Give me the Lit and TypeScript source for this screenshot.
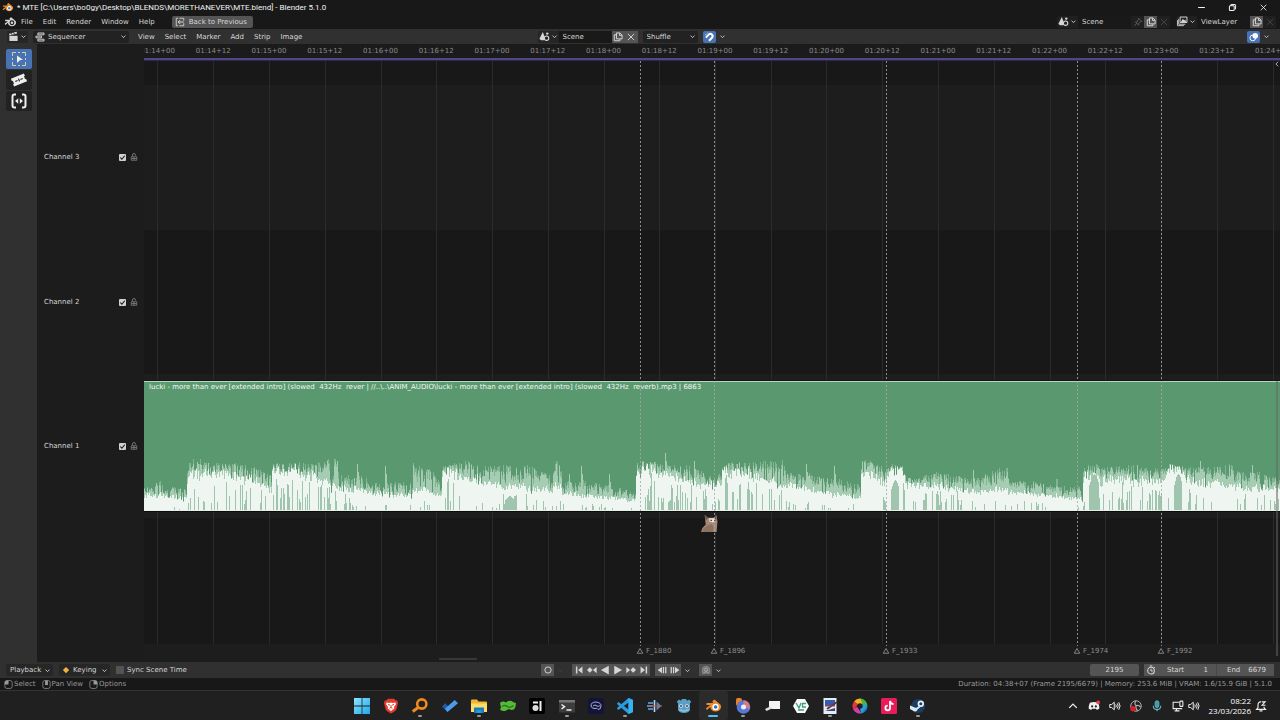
import { LitElement, html, svg, css, nothing, TemplateResult } from "lit";
import { customElement, property } from "lit/decorators.js";

/* ---------- icon set ---------- */

const glyphs: Record<string, TemplateResult> = {
  blender: svg`<path d="M9.500 1.500 15 6.200c1 .9 1.300 2 1 3.400-.6 2.600-2.800 4-5.400 4-2.900 0-5.200-1.800-5.400-4.500L2 12 .8 10.400 5.200 7H1.500V5h6.500L7.400 3Z" fill="currentColor"/><circle cx="10.600" cy="9" r="3.200" fill="var(--eye, #181818)"/><circle cx="10.600" cy="9" r="1.800" fill="var(--pupil, currentColor)"/>`,
  down: svg`<path d="M3.500 6 8 10.500 12.500 6" fill="none" stroke="currentColor" stroke-width="2"/>`,
  up: svg`<path d="M3 10.500 8 5.500l5 5" fill="none" stroke="currentColor" stroke-width="1.800"/>`,
  close: svg`<path d="m3 3 10 10M13 3 3 13" fill="none" stroke="currentColor" stroke-width="1.500"/>`,
  minimize: svg`<path d="M2 8h12" stroke="currentColor" stroke-width="1.800"/>`,
  restore: svg`<path d="M5 5V4q0-1.500 1.500-1.500h5Q13.500 2.500 13.500 4.500v5Q13.500 11 12 11" fill="none" stroke="currentColor" stroke-width="1.800"/><rect x="2.500" y="5" width="8.500" height="8.500" rx="1.500" fill="none" stroke="currentColor" stroke-width="1.800"/>`,
  back: svg`<path d="M5 2H2v12h3M7 2h7v4M14 10v4H7" fill="none" stroke="currentColor" stroke-width="1.400"/><path d="M14 8H5m3-3L5 8l3 3" fill="none" stroke="currentColor" stroke-width="1.600"/>`,
  editor: svg`<path d="M2 7h12v7.500H2z" fill="currentColor"/><path d="m1.500 4 11-3 .7 2.500-11 3z" fill="currentColor"/><path d="m4.500 3 1.500 2.500M8 2l1.500 2.500" stroke="#222" stroke-width="1.200"/>`,
  strips: svg`<path d="M4.500 1.500h10v3h-10zM1.500 6.500h9v3h-9zM4.500 11.500h10v3h-10z" fill="#555" stroke="currentColor" stroke-width="1.400"/>`,
  scene: svg`<path d="M5.500 1.500 9 10.500a4 3 0 0 1-8 0Z" fill="currentColor"/><circle cx="11" cy="10.500" r="3.200" fill="#222" stroke="currentColor" stroke-width="1.600"/><circle cx="12" cy="3.800" r="1.800" fill="currentColor"/>`,
  copy: svg`<path d="M5.500 1.500h5.500l3.500 3.500v6h-9Z" fill="none" stroke="currentColor" stroke-width="1.600"/><path d="M10.500 2v3.500H14M5 4.500H2v9.500h9v-2.500" fill="none" stroke="currentColor" stroke-width="1.600"/>`,
  layers: svg`<path d="M4.500 1.500h10v8h-10z" fill="#222" stroke="currentColor" stroke-width="1.400"/><path d="m5.500 9 3-5 2 2.500 1.500-1.500L13.500 9Z" fill="currentColor"/><path d="M2.500 4v8h9.500M.8 6v8H10" fill="none" stroke="currentColor" stroke-width="1.300"/>`,
  pin: svg`<path d="m9 2 5 5-2 .5-2.500 2.500-.5 3-5-5 3-.5L8.500 4ZM6 10l-4 4" fill="none" stroke="currentColor" stroke-width="1.300"/>`,
  magnet: svg`<path d="M3 9 7.500 4.200a3.600 3.600 0 0 1 5.200 5L8 14" fill="none" stroke="currentColor" stroke-width="3.200"/><path d="m2.500 5 1-2M6 2l-.5-1" stroke="currentColor" stroke-width="1.200"/>`,
  overlay: svg`<circle cx="6" cy="9.500" r="4.500" fill="none" stroke="currentColor" stroke-width="1.500"/><circle cx="10" cy="6" r="4.500" fill="currentColor"/>`,
  lock: svg`<path d="M5 7V4a3 3 0 0 1 6 0v1" fill="none" stroke="currentColor" stroke-width="1.600"/><path d="M2.500 7.500h11v7h-11zM8 8v6M3 11h10" fill="none" stroke="currentColor" stroke-width="1.500"/>`,
  pointer: svg`<path d="M1.500 5V1.500H5M7 1.500h2M11 1.500h3.500V5M14.500 7v2M14.500 11v3.500H11M9 14.500H7M5 14.500H1.500V11M1.500 9V7" fill="none" stroke="#d5d2a0" stroke-width="1"/><path d="m6 4.500 6 4.300-3.100.4L6 12Z" fill="currentColor"/>`,
  blade: svg`<g transform="rotate(-22 8 8)"><path d="M1 3.800h14v2.700h-1v3h1v2.700H1V9.500h1v-3H1z" fill="currentColor"/><path d="M4 8h2.500M9.500 8H12M8 6.500v3" stroke="#222" stroke-width="1.200"/></g>`,
  slip: svg`<path d="M5 1.500H3.500Q1.500 1.500 1.500 3.500v9q0 2 2 2H5M11 1.500h1.500q2 0 2 2v9q0 2-2 2H11" fill="none" stroke="currentColor" stroke-width="2"/><path d="M7.200 5.200v5.600L4 8ZM8.800 5.200v5.600L12 8Z" fill="currentColor"/>`,
  diamond: svg`<path d="m8 3 5 5-5 5-5-5Z" fill="#f5b042"/>`,
  ring: svg`<circle cx="8" cy="8" r="5" fill="none" stroke="currentColor" stroke-width="1.500"/>`,
  first: svg`<path d="M3 2.500h2.400v11H3zM13.500 2.500v11L6.500 8Z" fill="currentColor"/>`,
  prevKey: svg`<path d="M4.500 3.500 9 8l-4.500 4.500L0 8ZM15.500 3v10L9.500 8Z" fill="currentColor"/>`,
  reverse: svg`<path d="M14 1v14L1.500 8Z" fill="currentColor"/>`,
  play: svg`<path d="M2 1v14l12.500-7Z" fill="currentColor"/>`,
  nextKey: svg`<path d="M11.500 3.500 16 8l-4.500 4.500L7 8ZM.5 3v10l6-5Z" fill="currentColor"/>`,
  last: svg`<path d="M10.600 2.500H13v11h-2.400zM2.500 2.500v11l7-5.500Z" fill="currentColor"/>`,
  stepBack: svg`<path d="M8 3v10L1 8ZM9.300 3h2v10h-2zM13 3h2v10h-2z" fill="currentColor"/>`,
  stepNext: svg`<path d="M8 3v10l7-5ZM1 3h2v10H1zM4.700 3h2v10h-2z" fill="currentColor"/>`,
  ghost: svg`<path d="M2 13V8a6 6 0 0 1 12 0v5Z" fill="#777" stroke="#999"/><circle cx="8" cy="7.500" r="2.500" fill="none" stroke="#bbb"/><path d="m4 14 4-4 4 4" fill="none" stroke="#bbb"/>`,
  clock: svg`<circle cx="8" cy="9" r="5.300" fill="none" stroke="currentColor" stroke-width="1.700"/><path d="M8 6v3.500h3M6 1.500h4M12.500 3l1.500 1.500" fill="none" stroke="currentColor" stroke-width="1.600"/>`,
  mouseLeft: svg`<rect x="1.500" y="1" width="13" height="14" rx="3.500" fill="none" stroke="currentColor" stroke-width="1.300"/><path d="M1.500 8V4Q1.500 1 5 1h3v7Z" fill="currentColor"/>`,
  mouseMid: svg`<rect x="1.500" y="1" width="13" height="14" rx="3.500" fill="none" stroke="currentColor" stroke-width="1.300"/><path d="M5.500 1h5v8h-5Z" fill="currentColor"/>`,
  mouseRight: svg`<rect x="1.500" y="1" width="13" height="14" rx="3.500" fill="none" stroke="currentColor" stroke-width="1.300"/><path d="M14.500 8V4Q14.500 1 11 1H8v7Z" fill="currentColor"/>`,
  marker: svg`<path d="m8 3 5.500 9.500h-11Z" fill="none" stroke="currentColor" stroke-width="1.800"/>`,
  chevronLeft: svg`<path d="M11 2 5 8l6 6" fill="none" stroke="currentColor" stroke-width="2.200"/>`,
  tick: svg`<path d="m3 8 3.500 4L13 4" fill="none" stroke="currentColor" stroke-width="2.500"/>`,
  windows: svg`<defs><linearGradient id="w" x2="1" y2="1"><stop stop-color="#8ce4ff"/><stop offset="1" stop-color="#1fa6ea"/></linearGradient></defs><path d="M0 0h7.600v7.600H0zM8.400 0H16v7.600H8.400zM0 8.400h7.600V16H0zM8.400 8.400H16V16H8.400z" fill="url(#w)"/>`,
  brave: svg`<path d="m5 .8 6 0 1.500 1.500 1.700.2L15 5l-1.500 6q-.5 2-5.500 4.500Q3 13 2.500 11L1 5l.8-2.500 1.700-.2Z" fill="#e5392c"/><path d="m3.800 4.500 2.700.5L8 4.500l1.500.5 2.700-.5.8 1.500-2 3 .3 1.500L8 13l-3.300-2.500L5 9 3 6Z" fill="#fff"/><path d="m5 6.500 2 .7M11 6.500l-2 .7M8 7v2.500m-1.500.8L8 9.500l1.500.8" stroke="#e5392c" fill="none"/>`,
  everything: svg`<circle cx="9.800" cy="6" r="4.600" fill="none" stroke="#f08a1c" stroke-width="2.600"/><path d="m6.200 9.500-5.500 4" stroke="#f08a1c" stroke-width="3"/>`,
  todo: svg`<path d="M0 8.500 3.200 5.300l5.300 5.200-3 3.500Z" fill="#2059a8"/><path d="M5.500 14 2.900 10.800 12.700 2l3.300 3.200Z" fill="#4b9cec"/>`,
  folder: svg`<path d="M0 2.500Q0 1.500 1 1.500h5l1.500 2H15q1 0 1 1V14H0Z" fill="#f2b531"/><path d="M0 5.500h16V14H0z" fill="#fddc6a"/><path d="M3 9.500h10V15H3z" fill="#1d78bf"/><path d="M5.500 12h5v3h-5z" fill="#1ea0dd"/>`,
  frog: svg`<path d="M0 5q2.500-2.500 6-.5 2-2.500 5.500-1.500l2.500 1.500 2 .5q0 4-2 6.500l-3 .5-2-1-4 2q-3 .5-5-1.500l1-2Z" fill="#56b93b"/><path d="M2 8.500q3-2 5.500 0t6-1" stroke="#2c7a1d" fill="none" stroke-width="1.500"/>`,
  mono: svg`<rect width="16" height="16" rx="2" fill="#000"/><circle cx="6.500" cy="10" r="3" fill="#ddd"/><path d="M4 4.500h5M11.500 3v10" stroke="#f0f0f0" stroke-width="2"/>`,
  terminal: svg`<path d="M0 2h16v12.500H0z" fill="#3d3d3d"/><path d="M0 2h16v2.500H0z" fill="#777"/><path d="m2.500 6.500 3 2.200-3 2.300M7.500 12h5" fill="none" stroke="#eee" stroke-width="1.500"/>`,
  brain: svg`<rect width="16" height="16" rx="3" fill="#13143a"/><path d="M3 8q0-4 5-4 5 .5 5 4 0 3.500-3 3.500-1-2-3-1-3 .5-4-2.500Zm2 0q2-2 4 0 1.500 1 3-.5" fill="none" stroke="#a9aecb" stroke-width="1"/>`,
  code: svg`<path d="M11.500 0 16 2v12l-4.500 2L.5 6.500 0 5.300l1.500-1.300L11.500 11.500V4.500L1.500 12 0 10.700l.5-1.200Z" fill="#2b9be0"/><path d="M11.500 0 16 2v12l-4.500 2Z" fill="#36b2f4"/>`,
  merge: svg`<path d="M1 5h5M0 8h6M1 11h5" stroke="#4e88b9" stroke-width="1.800"/><path d="M7.500 2v12" stroke="#b9d5e8" stroke-width="1.600"/><path d="m9.500 3.500 5 4.500-5 4.500Z" fill="#5583ad"/><path d="M3 8h12" stroke="#cf5146"/>`,
  godot: svg`<path d="M2 5 .5 4 3 1.500l2 1.200L6 1h4l1 1.700 2-1.200L15.500 4 14 5v7q-1.500 3-6 3t-6-3Z" fill="#5a9fc8"/><circle cx="5" cy="8" r="1.800" fill="#eee"/><circle cx="11" cy="8" r="1.800" fill="#eee"/><circle cx="5" cy="8" r="1" fill="#345"/><circle cx="11" cy="8" r="1" fill="#345"/><path d="M3 12h3v1h4v-1h3" stroke="#a9cfe3" fill="none"/>`,
  resolve: svg`<rect x="1" y="0" width="6" height="8" rx="2" fill="#e78326"/><circle cx="8.500" cy="9" r="6.800" fill="#5577d8"/><path d="M8.500 2.200a6.800 6.800 0 0 1 6 9l-6-2.200Z" fill="#d67b83"/><circle cx="8.500" cy="9" r="2.500" fill="#eef"/>`,
  camera: svg`<path d="M5 3h11v8H8L5 9Z" fill="#f3f3f3"/><path d="m1 11 5-2.500 2 2L2.500 13Z" fill="#ddd"/>`,
  hexa: svg`<path d="M4 1h8l4 7-4 7H4L0 8Z" fill="#f7faf8"/><path d="m3 5 3 5 2-5M13 5.500H9.500V9H13M5 12h6" fill="none" stroke="#3f9c7c" stroke-width="1.300"/>`,
  paint: svg`<path d="M1.500 0h13v16h-13z" fill="#e6ecf4"/><path d="M3 2h10v6H3z" fill="#335eb0"/><path d="m3 13 10-3v3Z" fill="#324a7b"/><path d="m5 11 10-7" stroke="#5b3a3a" stroke-width="2"/><path d="M3 8h10" stroke="#aa3e4a"/>`,
  spiral: svg`<path d="M8 .5A7.500 7.500 0 0 1 15.500 8L11 7Z" fill="#42b649"/><path d="M15.500 8A7.500 7.500 0 0 1 9 15.400L9 11Z" fill="#227bdc"/><path d="M9.500 15.400A7.500 7.500 0 0 1 1 11L5 8.500Z" fill="#d43ca8"/><path d="M1.200 11.200A7.500 7.500 0 0 1 2.500 3L8 5Z" fill="#e53a2e"/><path d="M2.200 3.300A7.500 7.500 0 0 1 8.500.5L11 7 6 6Z" fill="#f2b522"/><path d="m11 6 4.500 2L9 15.400 8 10Z" fill="#25a3d6"/><circle cx="8" cy="8" r="2.700" fill="#222"/>`,
  note: svg`<rect width="16" height="16" rx="1.500" fill="#e81c5a"/><path d="M9 3v7a2.300 2.300 0 1 1-2.300-2.300M9 3q.5 3 3.500 3.200" fill="none" stroke="#fff" stroke-width="1.800"/>`,
  steam: svg`<path d="M1 7q1.500-6 7.500-6 6.500.5 6.500 7t-7 7q-5 0-6.500-4.500Z" fill="#1b3c63"/><circle cx="10.800" cy="5.800" r="3.200" fill="#e9f1f8"/><circle cx="10.800" cy="5.800" r="1.500" fill="#1b3c63"/><path d="m0 7.500 6 2.500 3-2 1.500 1-3 2.500q-.5 2.500-3 2L0 11Z" fill="#dce9f3"/>`,
  discord: svg`<path d="M2.500 3.500Q8 1.500 13.500 3.500q2 4 1.500 8-2 1.500-3.500 1.500l-1-1.500h-5l-1 1.500Q3 13 1 11.500q-.5-4 1.500-8Z" fill="#f0f0f0"/><circle cx="5.500" cy="8.500" r="1.400" fill="#222"/><circle cx="10.500" cy="8.500" r="1.400" fill="#222"/><circle cx="13.500" cy="3" r="2.500" fill="#ee4352"/>`,
  speaker: svg`<path d="M1 6h2.500L7 3v10L3.500 10H1Z" fill="none" stroke="currentColor" stroke-width="1.300"/><path d="M9 6q1.500 2 0 4M11 4.500q2.500 3.500 0 7M13 3q3.500 5 0 10" fill="none" stroke="currentColor" stroke-width="1.300"/>`,
  obs: svg`<circle cx="8" cy="8" r="7" fill="#202020" stroke="#b5b5b5" stroke-width="1.300"/><path d="M8 1.500q-3 3 0 6 4-1 6 2M8 7.500q-1 4 2 6.500" fill="none" stroke="#b5b5b5" stroke-width="1.500"/><circle cx="4" cy="11.500" r="3.600" fill="#dc1f26"/>`,
  mic: svg`<rect x="5.500" y="1" width="5" height="9" rx="2.500" fill="#3f9ba6" stroke="#6ec1cb"/><path d="M3 7.500q0 5 5 5t5-5M8 12.500V15" fill="none" stroke="#6ec1cb" stroke-width="1.400"/>`,
  monitor: svg`<path d="M10 3H1.500v8.500h12M6 12v2.500M3.500 14.500H10" fill="none" stroke="currentColor" stroke-width="1.400"/><rect x="10.500" y="1.500" width="4" height="7" rx="1" fill="none" stroke="currentColor" stroke-width="1.400"/>`,
  bell: svg`<path d="M8 2.500Q4 2 4 7v3l-2 2.500h12L12 10V9M6 14.500h4" fill="none" stroke="currentColor" stroke-width="1.500"/><path d="M9 2.500h4.500L9.500 7H14" fill="none" stroke="currentColor" stroke-width="1.500"/>`,
  cat: svg`<path d="M3.500.5 6.500 3H12L14.500.5l1 6-.8 10H0Q1 12 4.500 9.500L4 6Z" fill="#a48a76"/><path d="M3.500.5 6.500 3 4.500 6ZM14.500.5 12 3l2.500 3Z" fill="#6d5648"/><path d="M7.500 3.500h5l2 2.500-3.500 1.500L8 6.500Z" fill="#efe2d4"/><path d="M9 5.500h1.200M12.500 5.500h1.200" stroke="#222" stroke-width="1.200"/><path d="M10 9q3 3 1 7.500H1Q2 11 10 9Z" fill="#8d735f"/>`,
};

@customElement("ui-icon")
export class UiIcon extends LitElement {
  @property() name = "";
  static styles = css`
    :host { display: inline-block; flex: none; width: 10px; height: 10px; }
    svg { display: block; width: 100%; height: 100%; overflow: visible; }
  `;
  render() {
    return html`<svg viewBox="0 0 16 16" aria-hidden="true">${glyphs[this.name] ?? nothing}</svg>`;
  }
}

/* ---------- sound strip waveform ---------- */

/* [x, peak height, body height, notch density] */
const envelope: number[][] = [
  [0, 28, 14, 0], [8, 24, 14, 0], [16, 34, 15, 0], [22, 26, 14, 0], [42, 24, 11, 0], [43, 46, 26, .1],
  [46, 54, 34, .2], [60, 51, 36, .4], [90, 49, 33, .45], [112, 45, 28, .4], [127, 36, 20, .3],
  [128, 48, 38, .3], [150, 50, 37, .5], [176, 51, 29, .5], [187, 55, 24, .4], [194, 52, 22, .4],
  [196, 38, 22, .3], [218, 36, 19, .2], [230, 32, 16, .05], [266, 30, 14, .1], [268, 30, 14, .1],
  [269, 52, 20, .1], [276, 52, 18, .2], [278, 46, 20, .2], [288, 42, 18, .1], [297, 26, 14, 0],
  [298, 48, 38, .5], [320, 51, 32, .2], [345, 48, 24, .1], [370, 46, 23, .5], [386, 48, 20, .3],
  [408, 36, 20, .2], [409, 53, 22, .2], [416, 53, 22, .2], [418, 34, 17, .05], [440, 31, 14, .1],
  [465, 27, 12, .05], [491, 20, 9, .05], [492, 50, 34, .1], [500, 52, 38, .2], [521, 49, 34, .5],
  [545, 46, 28, .5], [558, 40, 24, .4], [577, 38, 25, .1], [578, 49, 38, .4], [605, 50, 34, .6],
  [630, 52, 27, .5], [640, 54, 22, .3], [642, 42, 23, .2], [665, 38, 19, .2], [690, 34, 15, .1],
  [716, 28, 12, .15], [717, 53, 34, .1], [730, 50, 33, .2], [742, 44, 26, .2], [745, 49, 38, .1],
  [758, 48, 38, .3], [762, 34, 24, .4], [790, 39, 24, .5], [805, 39, 21, .3], [827, 35, 17, .2],
  [845, 40, 18, .1], [855, 46, 20, .1], [863, 45, 18, .2], [866, 31, 17, .1], [890, 31, 16, .3],
  [911, 25, 13, .1], [912, 40, 14, .1], [914, 28, 12, 0], [938, 26, 11, 0], [939, 46, 30, 0],
  [952, 49, 36, .1], [957, 45, 28, .2], [960, 46, 30, .4], [985, 47, 30, .4], [1020, 44, 29, .4],
  [1024, 48, 42, .1], [1036, 48, 42, .1], [1042, 46, 28, .4], [1065, 46, 25, .2], [1086, 48, 24, .1],
  [1100, 39, 22, .3], [1116, 41, 22, .3], [1136, 34, 20, .3],
];
const spikes: Record<number, number> = { 213: 46, 241: 44, 425: 36, 437: 44, 465: 36, 521: 57, 550: 49, 662: 46, 690: 44, 829: 40, 1056: 49, 1108: 45 };
/* dips that open in the loud body: [from, to, height] */
const hollows: number[][] = [[361, 370, 14], [747, 755, 30], [945, 955, 36], [1030, 1038, 36]];

function waveform() {
  let seed = 7;
  const rnd = () => (seed = (seed * 16807) % 2147483647) / 2147483647;
  let haze = "", peak = "", body = "", notch = "", k = 0, drift = 0.5;
  const column = (x: number, h: number) => `M${x} 60V${(60 - h).toFixed(1)}h1V60z`;
  for (let x = 0; x < 1136; x++) {
    while (k < envelope.length - 2 && envelope[k + 1][0] <= x) k++;
    const a = envelope[k], b = envelope[k + 1];
    const t = Math.min(1, (x - a[0]) / (b[0] - a[0]));
    const mix = (i: number) => a[i] + (b[i] - a[i]) * t;
    drift = drift * 0.6 + rnd() * 0.4;
    let p = mix(1) - rnd() * rnd() * (mix(1) - mix(2)) * 1.1 - drift * 5;
    const s = spikes[x] ?? (spikes[x - 1] ? spikes[x - 1] - 8 : 0);
    if (s) p = s;
    const m = Math.max(7, Math.min(p - 1, mix(2) * (0.72 + drift * 0.3 + rnd() * 0.34)));
    haze += column(x, p);
    peak += column(x, s ? p : m + (p - m) * (0.45 + rnd() * 0.55));
    body += column(x, m);
    const hollow = hollows.find((h) => x >= h[0] && x < h[1]);
    const hit = rnd() < mix(3) * 0.8 + 0.04;
    const depth = mix(3) > 0.25 ? m * (0.2 + rnd() * 0.65) : m * (0.1 + rnd() * 0.35);
    if (hollow) notch += column(x, hollow[2] * (0.7 + 0.3 * Math.sin((Math.PI * (x - hollow[0])) / (hollow[1] - hollow[0]))));
    else if (hit) notch += column(x, depth);
  }
  return { haze, peak, body, notch };
}

@customElement("sound-strip")
export class SoundStrip extends LitElement {
  @property() label = "";
  private wave = waveform();
  static styles = css`
    :host {
      display: flex; flex-direction: column; justify-content: space-between; overflow: hidden;
      background: #5a996f; border-top: 1px solid #b9d6c3; border-bottom: 1px solid #e8efea;
      box-shadow: 0 1px #0c0c0c, 0 -1px #151515; box-sizing: border-box;
    }
    .label { padding-left: 5px; line-height: 11px; color: #f2f7f3; white-space: pre; }
    svg { display: block; width: 100%; height: 60px; }
    .haze { fill: #82b393; }
    .peak { fill: #a6ccb3; }
    .body { fill: #eff5f1; }
    .notch { fill: #a0c5ae; }
  `;
  render() {
    return html`<div class="label">${this.label}</div>
      <svg viewBox="0 0 1136 60" preserveAspectRatio="none" shape-rendering="crispEdges" aria-hidden="true">
        <path class="haze" d=${this.wave.haze}></path>
        <path class="peak" d=${this.wave.peak}></path>
        <path class="body" d=${this.wave.body}></path>
        <path class="notch" d=${this.wave.notch}></path>
      </svg>`;
  }
}

/* ---------- timeline ---------- */

const SPAN = 1136;
const pct = (x: number) => `${((x / SPAN) * 100).toFixed(3)}%`;
const ticks = [
  "01:14+00", "01:14+12", "01:15+00", "01:15+12", "01:16+00", "01:16+12", "01:17+00", "01:17+12", "01:18+00", "01:18+12",
  "01:19+00", "01:19+12", "01:20+00", "01:20+12", "01:21+00", "01:21+12", "01:22+00", "01:22+12", "01:23+00", "01:23+12", "01:24+00",
].map((text, i) => ({ text, x: 13.5 + i * 55.75 }));
const markers = [
  { text: "F_1880", x: 496 }, { text: "F_1896", x: 570 }, { text: "F_1933", x: 742 }, { text: "F_1974", x: 933 }, { text: "F_1992", x: 1017 },
];

@customElement("time-line")
export class TimeLine extends LitElement {
  static styles = css`
    :host { display: grid; grid-template-rows: 14px 3px 1fr; position: relative; overflow: hidden; background: #1d1d1d; }
    .ruler { position: relative; background: #1b1b1b; color: #8b8b8b; }
    .tick { position: absolute; top: 0; line-height: 15px; transform: translateX(-50%); white-space: nowrap; }
    .range { background: #51468a; border-bottom: 1px solid #2c2847; box-sizing: border-box; }
    .canvas { position: relative; display: grid; grid-template-rows: 24fr 145fr 145fr 144fr 126fr 18fr; }
    .dark { background: #181818; }
    .light { background: #1d1d1d; }
    .grid { position: absolute; top: 0; bottom: 18px; width: 1px; background: #2b2b2b; }
    .marker { position: absolute; top: 0; bottom: 6px; display: flex; flex-direction: column; width: 1px; color: #8d8d8d; }
    .dash { flex: 1; background: repeating-linear-gradient(#a8a8a8 0 2px, transparent 2px 4px); opacity: .8; }
    .tag { display: flex; align-items: center; gap: 2px; height: 10px; margin-left: -4px; line-height: 10px; white-space: nowrap; }
    .tag ui-icon { width: 8px; height: 8px; }
    .vbar { position: absolute; right: 2px; top: 320px; bottom: 6px; width: 2px; background: #6668; }
    .hbar { position: absolute; left: 26%; bottom: 2px; width: 38px; height: 2px; border-radius: 1px; background: #383838; }
    .more { position: absolute; right: 0; top: 0; width: 6px; height: 6px; color: #ccc; }
  `;
  render() {
    return html`
      <div class="ruler">${ticks.map((t) => html`<span class="tick" style="left:${pct(t.x)}">${t.text}</span>`)}</div>
      <div class="range"></div>
      <div class="canvas">
        <div class="dark"></div><div class="light"></div><div class="dark"></div>
        <div class="light"></div><div class="dark"></div><div class="light"></div>
        ${ticks.map((t) => html`<i class="grid" style="left:${pct(t.x)}"></i>`)}
        <slot></slot>
        ${markers.map((m) => html`<div class="marker" style="left:${pct(m.x)}"><i class="dash"></i><span class="tag"><ui-icon name="marker"></ui-icon>${m.text}</span></div>`)}
        <i class="vbar"></i><i class="hbar"></i><ui-icon class="more" name="chevronLeft"></ui-icon>
      </div>`;
  }
}

/* ---------- application ---------- */

const button = (icon: string, label: string, cls = "") =>
  html`<button class="btn ${cls}" aria-label=${label}><ui-icon name=${icon}></ui-icon></button>`;
const typed = (icon: string, label: string) =>
  html`<button class="type" aria-label=${label}><ui-icon name=${icon}></ui-icon><ui-icon class="chev" name="down"></ui-icon></button>`;

const apps: [string, string, string][] = [
  ["windows", "Start", ""], ["brave", "Brave", ""], ["everything", "Everything", "run"], ["todo", "To Do", ""], ["folder", "File Explorer", "run"],
  ["frog", "Frog", ""], ["mono", "Audio", ""], ["terminal", "Terminal", "run"], ["brain", "Brain", ""], ["code", "Visual Studio Code", "run"],
  ["merge", "Merge", ""], ["godot", "Godot", ""], ["blender", "Blender", "active"], ["resolve", "Media", "run"], ["camera", "Camera", ""],
  ["hexa", "VC", ""], ["paint", "Paint", "run"], ["spiral", "Spiral", ""], ["note", "Music", ""], ["steam", "Steam", "run"],
];

@customElement("app-root")
export class AppRoot extends LitElement {
  static styles = css`
    :host {
      display: grid; grid-template-rows: 14px 15px 15px 1fr 16px 13px 29px; height: 100vh; min-height: 480px; overflow: hidden;
      background: #181818; color: #d6d6d6; font: 7px/12px "DejaVu Sans", sans-serif;
    }
    button, input, select { font: inherit; color: inherit; margin: 0; padding: 0; border: 0; background: none; outline: 0; min-width: 0; box-sizing: border-box; }
    button { display: flex; align-items: center; justify-content: center; white-space: nowrap; }
    .bar { display: flex; align-items: center; }
    .spread { display: grid; grid-template-columns: 1fr auto 1fr; align-items: center; }
    .end { justify-self: end; }

    .title { padding: 0 12px 0 2px; gap: 4px; color: #f2f2f2; font: 8px/13px Roboto, sans-serif; }
    .title .logo { width: 11px; height: 11px; color: #ec8a2c; --pupil: #3d8ed0; --eye: #fff; }
    .window { display: flex; margin-left: auto; gap: 22px; }
    .window ui-icon { width: 9px; height: 9px; }

    .menubar { padding: 0 4px; }
    .menubar .logo { width: 12px; height: 12px; margin-right: 5px; }
    .menus { display: flex; gap: 10px; }
    .back { gap: 4px; height: 12px; margin-left: 17px; padding: 0 6px 0 3px; border-radius: 2px; background: #545454; }
    .data { display: flex; align-items: center; height: 12px; border-radius: 2px; background: #202020; }
    .menubar .data { margin-left: auto; }
    .menubar .data + .data { margin-left: 6px; }
    .type { width: 21px; height: 12px; gap: 1px; }
    .type ui-icon { width: 11px; height: 11px; }
    .type .chev, .chev { width: 7px; height: 7px; }
    .data input { width: 53px; height: 12px; padding-left: 4px; background: #191919; }
    .data .pin { color: #666; }
    .btn { width: 13px; height: 12px; background: #545454; }
    .btn ui-icon { width: 10px; height: 10px; }
    .btn.menu { background: none; }
    .btn.menu ui-icon { width: 7px; height: 7px; }
    .btn.flat { background: none; }
    .btn.dim { background: none; color: #444; }
    .btn.on { background: #4772b3; color: #fff; border-radius: 2px; }

    .header { padding: 0 7px; background: #303030; }
    .header .type { background: #262626; }
    .left { gap: 5px; }
    .header .menus { padding-left: 4px; }
    .combo { display: flex; align-items: center; height: 12px; padding: 0 2px; gap: 3px; border-radius: 2px; background: #222; }
    .combo select { appearance: none; flex: 1; height: 12px; }
    .editor { width: 96px; box-sizing: border-box; }
    .mid { gap: 5px; padding-right: 14px; }
    .mode { width: 55px; padding-left: 4px; box-sizing: border-box; }
    .group { display: flex; border-radius: 2px; }

    .main { display: grid; grid-template-columns: 37px 107px 1fr; min-height: 0; }
    .tools { display: flex; flex-direction: column; align-items: center; gap: 1px; padding-top: 5px; background: #303030; }
    .tool { width: 26px; height: 20px; border-radius: 2px; background: #222; color: #eee; }
    .tool ui-icon { width: 16px; height: 16px; }
    .tool.on { background: #4772b3; }
    .channels { display: grid; grid-template-rows: 41fr 145fr 145fr 144fr 144fr; background: #1c1c1c; }
    .channel { display: flex; align-items: center; gap: 4px; padding: 0 6px 0 7px; }
    .channel label { flex: 1; }
    .channel ui-icon { width: 8px; height: 8px; color: #888; }
    .check { appearance: none; width: 7px; height: 7px; border-radius: 1px; background: #545454; }
    .check:checked { background: #d0d0d0; }
    .checkwrap { display: grid; }
    .checkwrap > * { grid-area: 1 / 1; }
    .channel .checkwrap ui-icon { width: 7px; height: 7px; color: #111; pointer-events: none; }
    time-line { min-width: 0; }
    .cat { position: absolute; left: 49%; top: 453px; width: 17px; height: 18px; }
    .strip { position: absolute; left: 0; right: 0; top: 320px; height: 130px; }

    .playback { padding: 0 6px; background: #303030; }
    .playback .left { gap: 6px; }
    .playback .combo { background: #262626; }
    .sync { display: flex; align-items: center; gap: 3px; }
    .sync .check { width: 8px; height: 8px; }
    .playback .pb { width: 47px; padding-left: 4px; gap: 0; box-sizing: border-box; }
    .playback .key { width: 51px; gap: 2px; box-sizing: border-box; }
    .key ui-icon:first-child { width: 10px; height: 10px; }
    .num { display: flex; align-items: center; height: 12px; padding: 0 8px; background: #545454; box-sizing: border-box; }
    .num input { flex: 1; width: 0; text-align: right; }
    .frame { width: 49px; border-radius: 2px; margin-right: 5px; }
    .frame input { text-align: center; }
    .start { width: 60px; padding-left: 10px; border-right: 1px solid #484848; }
    .finish { width: 57px; padding-left: 10px; }

    .status { padding: 0 8px 0 4px; gap: 6px; color: #9a9a9a; border-bottom: 1px solid #333; box-sizing: border-box; }
    .hint { display: flex; align-items: center; gap: 1px; }
    .hint ui-icon { width: 9px; height: 9px; }
    .stats { margin-left: auto; }

    .taskbar { background: #202020; }
    .apps { display: flex; width: 586px; height: 29px; }
    .app { position: relative; flex: 1; }
    .app ui-icon { width: 16px; height: 16px; --pupil: #2f73b5; --eye: #fff; }
    .app.active { color: #ef8a2b; background: #2b2b2b; border-radius: 3px; }
    .app.run::after, .app.active::after { content: ""; position: absolute; bottom: 3px; width: 4px; height: 2px; border-radius: 1px; background: #999; }
    .app.active::after { width: 10px; background: #4cc2ff; }
    .tray { display: flex; align-items: center; gap: 9px; padding-right: 13px; color: #eee; }
    .tray ui-icon { width: 12px; height: 12px; }
    .pair { display: flex; gap: 4px; }
    .clock { font: 8px/10px "Open Sans", sans-serif; text-align: right; color: #fff; }
    .now { gap: 4px; display: flex; align-items: center; }
  `;

  private num(id: string, label: string, value: string, cls: string) {
    return html`<div class="num ${cls}">${label ? html`<label for=${id}>${label}</label>` : nothing}<input id=${id} aria-label=${label || "Current frame"} value=${value}></div>`;
  }

  render() {
    return html`
      <div class="bar title">
        <ui-icon class="logo" name="blender"></ui-icon>
        <span>* MTE [C:\\Users\\bo0gy\\Desktop\\BLENDS\\MORETHANEVER\\MTE.blend] - Blender 5.1.0</span>
        <div class="window">
          <button aria-label="Minimize"><ui-icon name="minimize"></ui-icon></button>
          <button aria-label="Restore"><ui-icon name="restore"></ui-icon></button>
          <button aria-label="Close"><ui-icon name="close"></ui-icon></button>
        </div>
      </div>

      <nav class="bar menubar">
        <ui-icon class="logo" name="blender"></ui-icon>
        <div class="menus">${["File", "Edit", "Render", "Window", "Help"].map((m) => html`<button>${m}</button>`)}</div>
        <button class="back"><ui-icon name="back"></ui-icon>Back to Previous</button>
        <div class="data">${typed("scene", "Browse scene")}<input aria-label="Scene" value="Scene">${button("pin", "Pin scene", "flat pin")}${button("copy", "New scene")}${button("close", "Remove scene", "dim")}</div>
        <div class="data">${typed("layers", "Browse view layer")}<input aria-label="View layer" value="ViewLayer">${button("copy", "New view layer")}${button("close", "Remove view layer", "dim")}</div>
      </nav>

      <header class="spread header">
        <div class="bar left">
          ${typed("editor", "Editor type")}
          <div class="combo editor"><ui-icon name="strips"></ui-icon><select aria-label="View type"><option>Sequencer</option></select><ui-icon class="chev" name="down"></ui-icon></div>
          <div class="menus">${["View", "Select", "Marker", "Add", "Strip", "Image"].map((m) => html`<button>${m}</button>`)}</div>
        </div>
        <div class="bar mid">
          <div class="data">${typed("scene", "Browse scene")}<input aria-label="Sequencer scene" value="Scene"><div class="group">${button("copy", "New scene")}${button("close", "Unlink scene")}</div></div>
          <div class="combo mode"><select aria-label="Overlap mode"><option>Shuffle</option></select><ui-icon class="chev" name="down"></ui-icon></div>
          <div class="group">${button("magnet", "Snap", "on")}${button("down", "Snapping options", "menu")}</div>
        </div>
        <div class="group end">${button("overlay", "Show overlays", "on")}${button("down", "Overlay options", "menu")}</div>
      </header>

      <main class="main">
        <div class="tools">
          <button class="tool on" aria-label="Select box"><ui-icon name="pointer"></ui-icon></button>
          <button class="tool" aria-label="Blade"><ui-icon name="blade"></ui-icon></button>
          <button class="tool" aria-label="Slip"><ui-icon name="slip"></ui-icon></button>
        </div>
        <div class="channels">
          <span></span>
          ${[3, 2, 1].map((n) => html`<div class="channel"><label for="ch${n}">Channel ${n}</label><span class="checkwrap"><input class="check" id="ch${n}" type="checkbox" checked><ui-icon name="tick"></ui-icon></span><ui-icon name="lock"></ui-icon></div>`)}
        </div>
        <time-line>
          <sound-strip class="strip" label="lucki - more than ever [extended intro] (slowed  432Hz  rever | //..\\..\\ANIM_AUDIO\\lucki - more than ever [extended intro] (slowed  432Hz  reverb).mp3 | 6863"></sound-strip>
          <ui-icon class="cat" name="cat"></ui-icon>
        </time-line>
      </main>

      <section class="spread playback">
        <div class="bar left">
          <div class="combo pb"><select aria-label="Playback"><option>Playback</option></select><ui-icon class="chev" name="down"></ui-icon></div>
          <div class="combo key"><ui-icon name="diamond"></ui-icon><select aria-label="Keying"><option>Keying</option></select><ui-icon class="chev" name="down"></ui-icon></div>
          <label class="sync"><input class="check" type="checkbox">Sync Scene Time</label>
        </div>
        <div class="bar mid">
          <div class="group">${button("ring", "Auto keying")}${button("down", "Auto keying options", "menu dim")}</div>
          <div class="group">${button("first", "Jump to start")}${button("prevKey", "Previous keyframe")}${button("reverse", "Play reversed")}${button("play", "Play")}${button("nextKey", "Next keyframe")}${button("last", "Jump to end")}</div>
          <div class="group">${button("stepBack", "Step back")}${button("stepNext", "Step forward")}${button("down", "Jump options", "menu")}</div>
          <div class="group">${button("ghost", "Snap playhead")}${button("down", "Playhead options", "menu")}</div>
        </div>
        <div class="bar end">
          ${this.num("frame", "", "2195", "frame")}
          ${button("clock", "Preview range")}${this.num("start", "Start", "1", "start")}${this.num("finish", "End", "6679", "finish")}
        </div>
      </section>

      <footer class="bar status">
        <span class="hint"><ui-icon name="mouseLeft"></ui-icon>Select</span>
        <span class="hint"><ui-icon name="mouseMid"></ui-icon>Pan View</span>
        <span class="hint"><ui-icon name="mouseRight"></ui-icon>Options</span>
        <span class="stats">Duration: 04:38+07 (Frame 2195/6679) | Memory: 253.6 MiB | VRAM: 1.6/15.9 GiB | 5.1.0</span>
      </footer>

      <div class="spread taskbar">
        <span></span>
        <div class="apps">${apps.map(([icon, label, state]) => html`<button class="app ${state}" aria-label=${label}><ui-icon name=${icon}></ui-icon></button>`)}</div>
        <div class="tray end">
          <ui-icon name="up"></ui-icon><ui-icon name="discord"></ui-icon><ui-icon name="speaker"></ui-icon><ui-icon name="obs"></ui-icon><ui-icon name="mic"></ui-icon>
          <span class="pair"><ui-icon name="monitor"></ui-icon><ui-icon name="speaker"></ui-icon></span>
          <span class="now"><span class="clock">08:22<br>23/03/2026</span><ui-icon name="bell"></ui-icon></span>
        </div>
      </div>`;
  }
}
